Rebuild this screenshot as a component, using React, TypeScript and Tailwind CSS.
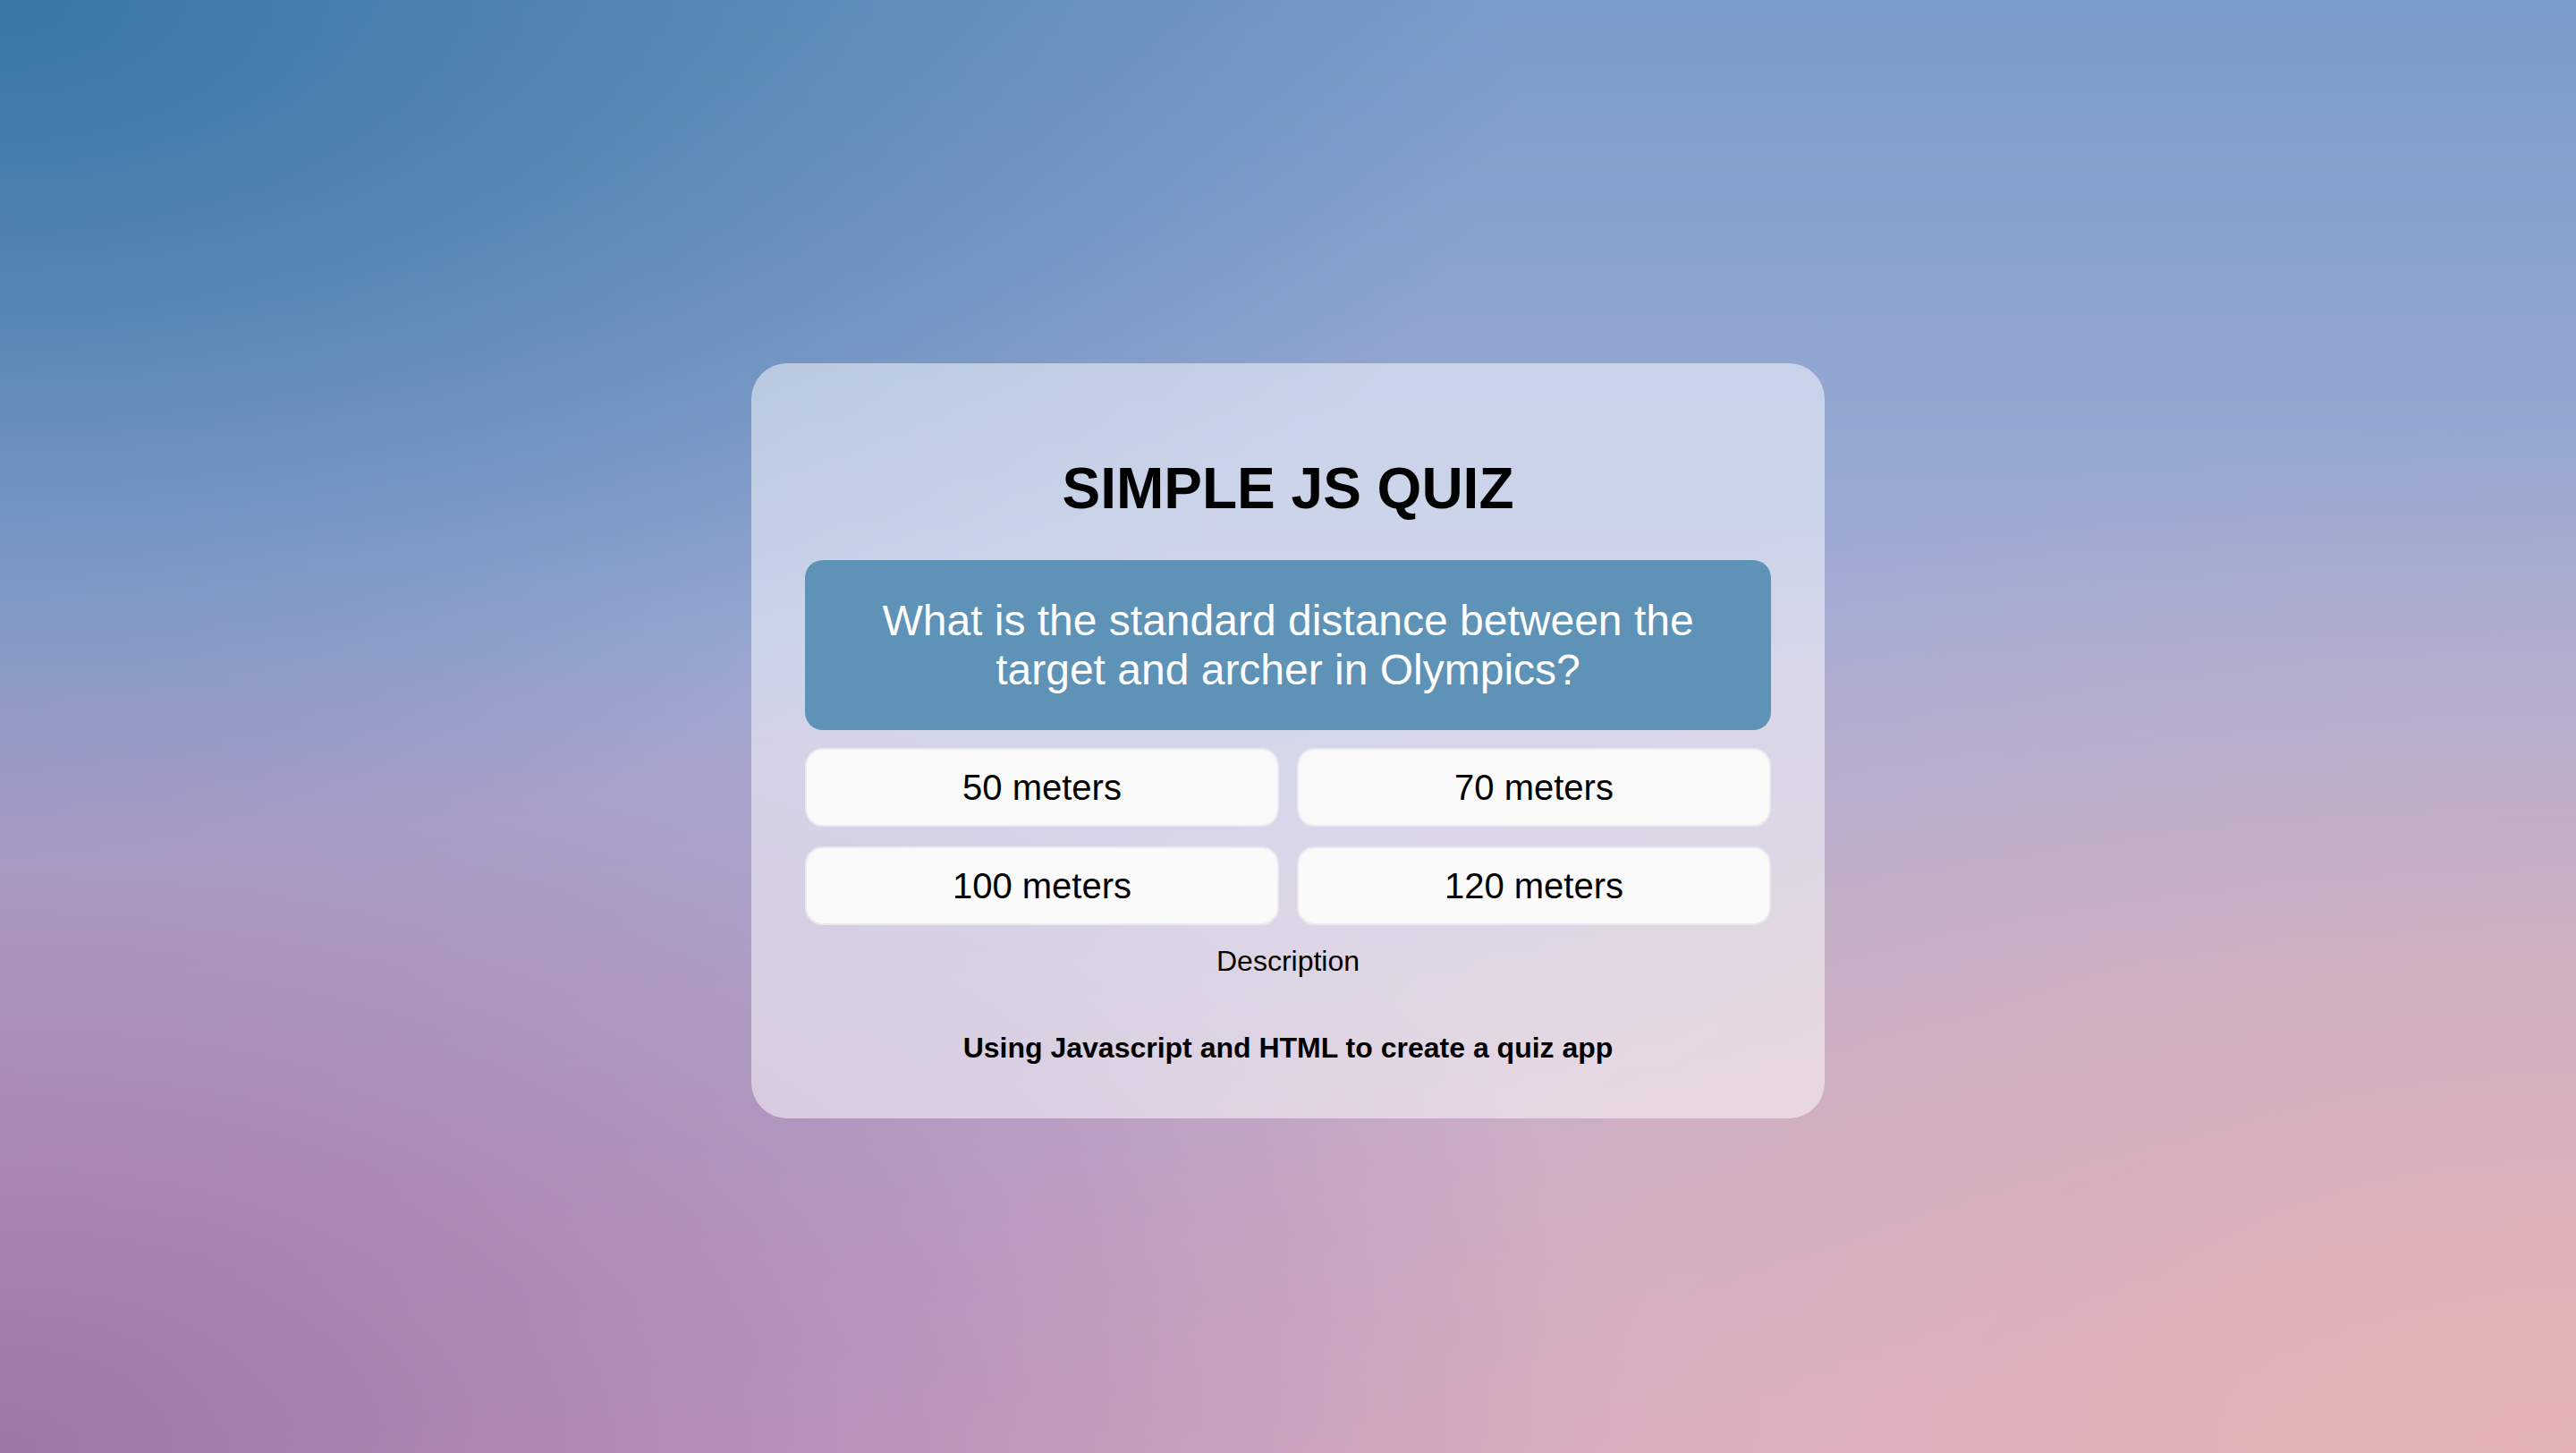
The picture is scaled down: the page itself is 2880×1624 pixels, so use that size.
import { FC } from "react"

const answers = ["50 meters", "70 meters", "100 meters", "120 meters"]

const App: FC = () => {
  return (
    <div
      className="min-h-screen w-full flex items-center justify-center pt-[31px] font-['Liberation_Sans',Arial,sans-serif] text-black
      bg-[radial-gradient(ellipse_at_0%_0%,#3a76a6_0%,rgba(58,118,166,0)_42%),radial-gradient(ellipse_at_0%_100%,#9c76a6_0%,rgba(156,118,166,0)_45%),radial-gradient(ellipse_at_100%_100%,#e4b2b2_0%,rgba(228,178,178,0)_50%),linear-gradient(180deg,#7a9cc8_0%,#a2acd6_45%,#d4accb_100%)]"
    >
      <div className="w-[1200px] rounded-[40px] bg-white/50 p-[60px] flex flex-col items-center">
        <h1 className="text-[64px] leading-[74px] font-bold my-[43px]">SIMPLE JS QUIZ</h1>
        <div className="w-full rounded-[20px] bg-[#5e92b6] text-white text-center text-[48px] leading-[55px] p-[40px]">
          What is the standard distance between the
          <br />
          target and archer in Olympics?
        </div>
        <div className="w-full grid grid-cols-2 gap-x-[20px] gap-y-[22px] mt-[20px]">
          {answers.map((answer) => (
            <button
              key={answer}
              className="bg-[#fafafa] border-2 border-[#e9e9ee] rounded-[20px] text-[40px] leading-[46px] py-[19px] text-center"
            >
              {answer}
            </button>
          ))}
        </div>
        <p className="text-[32px] leading-[37px] mt-[22px]">Description</p>
        <h4 className="text-[32px] leading-[37px] font-bold mt-[60px]">
          Using Javascript and HTML to create a quiz app
        </h4>
      </div>
    </div>
  )
}

export default App
